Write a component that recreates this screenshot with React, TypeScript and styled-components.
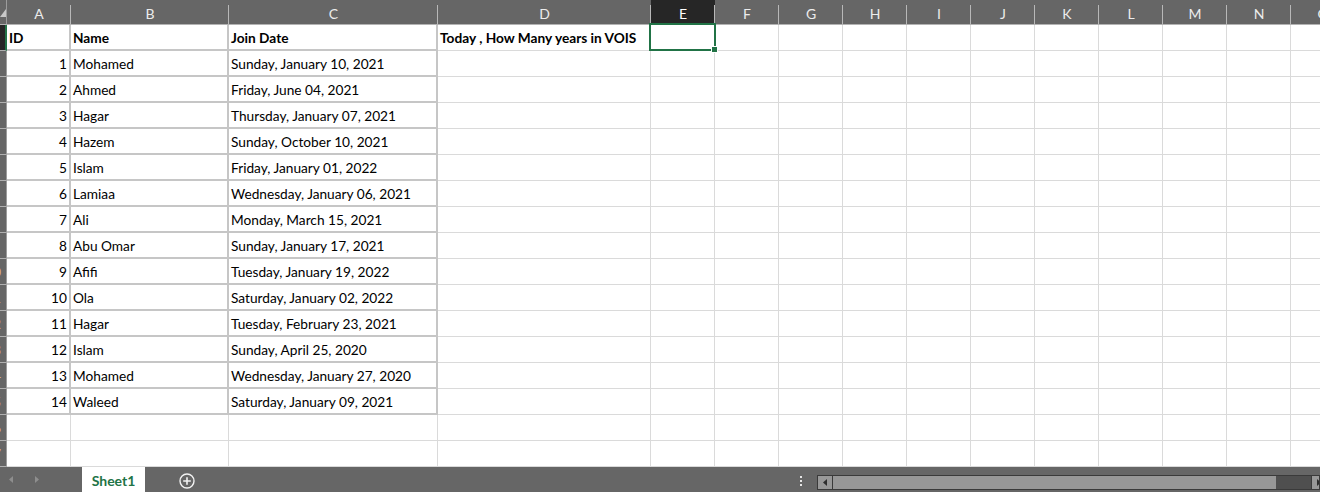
import React from 'react';
import styled, { createGlobalStyle } from 'styled-components';

const GlobalStyle = createGlobalStyle`
  html, body { margin: 0; padding: 0; background: #ffffff; }
  body { font-family: Lato, "Liberation Sans", sans-serif; overflow: hidden; }
`;

const GREEN = '#217346';
const COLS = ['A', 'B', 'C', 'D', 'E', 'F', 'G', 'H', 'I', 'J', 'K', 'L', 'M', 'N', 'O'];
const WIDTHS = [64, 158, 209, 213, 64, 64, 64, 64, 64, 64, 64, 64, 64, 64, 64];
const TOTAL_ROWS = 17;

const DATA: [number, string, string][] = [
  [1, 'Mohamed', 'Sunday, January 10, 2021'],
  [2, 'Ahmed', 'Friday, June 04, 2021'],
  [3, 'Hagar', 'Thursday, January 07, 2021'],
  [4, 'Hazem', 'Sunday, October 10, 2021'],
  [5, 'Islam', 'Friday, January 01, 2022'],
  [6, 'Lamiaa', 'Wednesday, January 06, 2021'],
  [7, 'Ali', 'Monday, March 15, 2021'],
  [8, 'Abu Omar', 'Sunday, January 17, 2021'],
  [9, 'Afifi', 'Tuesday, January 19, 2022'],
  [10, 'Ola', 'Saturday, January 02, 2022'],
  [11, 'Hagar', 'Tuesday, February 23, 2021'],
  [12, 'Islam', 'Sunday, April 25, 2020'],
  [13, 'Mohamed', 'Wednesday, January 27, 2020'],
  [14, 'Waleed', 'Saturday, January 09, 2021'],
];

const Page = styled.div`
  width: 1320px;
  height: 492px;
  display: flex;
  flex-direction: column;
  overflow: hidden;
`;

const Sheet = styled.div`
  flex: 0 0 467px;
  display: grid;
  grid-template-columns: 7px ${WIDTHS.map((w) => `${w}px`).join(' ')};
  grid-template-rows: 25px repeat(${TOTAL_ROWS}, 26px);
  overflow: hidden;
`;

const Corner = styled.div`
  box-sizing: border-box;
  background: #666666;
  border-bottom: 1px solid #b3b3b3;
  border-right: 1px solid #9c9c9c;
  display: flex;
  align-items: flex-start;
  justify-content: flex-end;
  padding-top: 9px;
`;

const ColHead = styled.div<{ $active?: boolean }>`
  box-sizing: border-box;
  background-color: ${(p) => (p.$active ? '#262626' : '#666666')};
  background-image: linear-gradient(#b8b8b8, #b8b8b8);
  background-size: 1px calc(100% - 5px);
  background-position: right bottom;
  background-repeat: no-repeat;
  border-bottom: 1px solid #b3b3b3;
  display: flex;
  align-items: center;
  justify-content: center;
  padding-top: 3px;
  color: ${(p) => (p.$active ? '#ffffff' : '#ececec')};
  font-size: 14px;
`;

const RowHead = styled.div<{ $active?: boolean }>`
  box-sizing: border-box;
  background: ${(p) => (p.$active ? '#262626' : '#666666')};
  border-bottom: 1px solid #b0b0b0;
  border-right: ${(p) => (p.$active ? `2px solid ${GREEN}` : '1px solid #9c9c9c')};
  overflow: hidden;
  display: flex;
  align-items: center;
  color: #d8b08a;
  font-size: 14px;
`;

const RowNum = styled.span`
  flex: 0 0 22px;
  margin-left: -18px;
  text-align: center;
`;

const Cell = styled.div<{ $tableR?: boolean; $tableB?: boolean; $right?: boolean; $bold?: boolean }>`
  box-sizing: border-box;
  position: relative;
  border-right: ${(p) => (p.$tableR ? '2px solid #c6c6c6' : '1px solid #dadada')};
  border-bottom: ${(p) => (p.$tableB ? '2px solid #c6c6c6' : '1px solid #dadada')};
  display: flex;
  align-items: center;
  justify-content: ${(p) => (p.$right ? 'flex-end' : 'flex-start')};
  padding: 0 2px 0 2px;
  font-size: 13.7px;
  font-weight: ${(p) => (p.$bold ? 700 : 400)};
  color: #000000;
  white-space: nowrap;
`;

const Selection = styled.div`
  position: absolute;
  left: -2px;
  top: -2px;
  right: -2px;
  bottom: -1px;
  border: 2px solid ${GREEN};
  pointer-events: none;
  z-index: 2;
`;

const Handle = styled.div`
  position: absolute;
  right: -4px;
  bottom: -4px;
  width: 5px;
  height: 5px;
  background: ${GREEN};
  border: 1px solid #ffffff;
`;

const Bar = styled.div`
  flex: 0 0 25px;
  background: #666666;
  display: flex;
  align-items: stretch;
`;

const Nav = styled.div`
  flex: 0 0 82px;
  display: flex;
  align-items: center;
  gap: 22px;
  padding-left: 9px;
  box-sizing: border-box;
`;

const Tab = styled.div`
  flex: 0 0 63px;
  background: #ffffff;
  color: ${GREEN};
  font-weight: 700;
  font-size: 14px;
  display: flex;
  align-items: center;
  justify-content: center;
  padding-top: 1px;
  box-sizing: border-box;
`;

const AddWrap = styled.div`
  flex: 0 0 auto;
  display: flex;
  align-items: center;
  padding-left: 34px;
  padding-top: 2px;
`;

const Spacer = styled.div`
  flex: 1 1 auto;
`;

const Dots = styled.div`
  flex: 0 0 24px;
  display: flex;
  flex-direction: column;
  align-items: center;
  justify-content: center;
  gap: 2px;
  padding-top: 2px;
  box-sizing: border-box;
`;

const Dot = styled.span`
  width: 2px;
  height: 2px;
  background: #e6e6e6;
`;

const Scroll = styled.div`
  flex: 0 0 503px;
  margin: 8px 0 2px 4px;
  box-sizing: border-box;
  height: 15px;
  border: 1px solid #3a3a3a;
  background: #4f4f4f;
  display: flex;
  overflow: hidden;
`;

const ScrollBtn = styled.div<{ $side: 'l' | 'r' }>`
  flex: 0 0 14px;
  background: #989898;
  display: flex;
  align-items: center;
  justify-content: center;
  ${(p) => (p.$side === 'l' ? 'border-right: 1px solid #3a3a3a;' : 'border-left: 1px solid #3a3a3a;')}
`;

const Thumb = styled.div`
  flex: 0 0 443px;
  background: #979797;
`;

const Track = styled.div`
  flex: 0 0 35px;
`;

const Tri = ({ dir, color, w = 4, h = 7 }: { dir: 'l' | 'r'; color: string; w?: number; h?: number }) => (
  <svg width={w} height={h} viewBox={`0 0 ${w} ${h}`}>
    {dir === 'l' ? (
      <polygon points={`${w},0 0,${h / 2} ${w},${h}`} fill={color} />
    ) : (
      <polygon points={`0,0 ${w},${h / 2} 0,${h}`} fill={color} />
    )}
  </svg>
);

const PlusIcon = () => (
  <svg width="16" height="16" viewBox="0 0 16 16">
    <circle cx="8" cy="8" r="7" fill="none" stroke="#f2f2f2" strokeWidth="1.4" />
    <path d="M8 4.2 V11.8 M4.2 8 H11.8" stroke="#f2f2f2" strokeWidth="1.6" />
  </svg>
);

const CornerTri = () => (
  <svg width="6" height="8" viewBox="0 0 6 8">
    <polygon points="6,0 6,8 0,8" fill="#c8c8c8" />
  </svg>
);

function cellContent(row: number, col: number): { text: string; bold?: boolean; right?: boolean } {
  if (row === 1) {
    if (col === 0) return { text: 'ID', bold: true };
    if (col === 1) return { text: 'Name', bold: true };
    if (col === 2) return { text: 'Join Date', bold: true };
    if (col === 3) return { text: 'Today , How Many years in VOIS', bold: true };
    return { text: '' };
  }
  const d = DATA[row - 2];
  if (!d || col > 2) return { text: '' };
  if (col === 0) return { text: String(d[0]), right: true };
  if (col === 1) return { text: d[1] };
  return { text: d[2] };
}

export default function App() {
  const rows = Array.from({ length: TOTAL_ROWS }, (_, i) => i + 1);
  return (
    <>
      <GlobalStyle />
      <Page>
        <Sheet>
          <Corner>
            <CornerTri />
          </Corner>
          {COLS.map((c) => (
            <ColHead key={c} $active={c === 'E'}>
              {c}
            </ColHead>
          ))}
          {rows.map((r) => (
            <React.Fragment key={r}>
              <RowHead $active={r === 1}>
                <RowNum>{r}</RowNum>
              </RowHead>
              {COLS.map((c, ci) => {
                const inTable = r <= 15 && ci <= 2;
                const content = cellContent(r, ci);
                return (
                  <Cell
                    key={c}
                    $tableR={inTable}
                    $tableB={inTable}
                    $right={content.right}
                    $bold={content.bold}
                  >
                    {content.text}
                    {r === 1 && c === 'E' && (
                      <Selection>
                        <Handle />
                      </Selection>
                    )}
                  </Cell>
                );
              })}
            </React.Fragment>
          ))}
        </Sheet>
        <Bar>
          <Nav>
            <Tri dir="l" color="#8e8e8e" />
            <Tri dir="r" color="#8e8e8e" />
          </Nav>
          <Tab>Sheet1</Tab>
          <AddWrap>
            <PlusIcon />
          </AddWrap>
          <Spacer />
          <Dots>
            <Dot />
            <Dot />
            <Dot />
          </Dots>
          <Scroll>
            <ScrollBtn $side="l">
              <Tri dir="l" color="#2e2e2e" />
            </ScrollBtn>
            <Thumb />
            <Track />
            <ScrollBtn $side="r">
              <Tri dir="r" color="#2e2e2e" />
            </ScrollBtn>
          </Scroll>
        </Bar>
      </Page>
    </>
  );
}
